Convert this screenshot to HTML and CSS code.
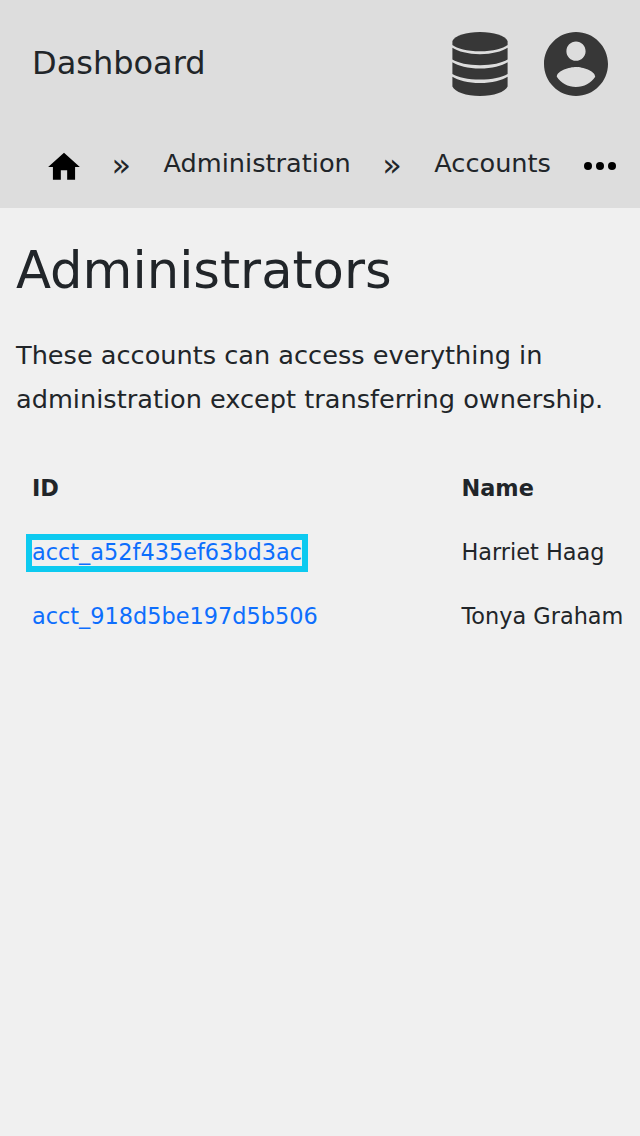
FILE: index.html
```html
<!DOCTYPE html>
<html lang="en">
<head>
<meta charset="utf-8">
<title>Administrators</title>
<link rel="stylesheet" href="styles.css">
</head>
<body>
<header class="header">
  <div class="topbar">
    <span class="brand">Dashboard</span>
    <svg class="icon-db" viewBox="0 0 56 64"><path d="M.4 9C3 3.500 14 0 28 0s25 3.500 27.600 9V13C51 16.500 41 19.300 28 19.300S5 16.500.4 13z"/><path d="M.4 15.800C6 19.500 16 22.200 28 22.200s22-2.700 27.600-6.400V27.500C50 31 40 33.200 28 33.200S6 31 .4 27.500z"/><path d="M.4 30.200C6 33.900 16 36.500 28 36.500s22-2.600 27.600-6.300V42C50 45.500 40 47.500 28 47.500S6 45.500.4 42z"/><path d="M.4 44.700C6 48.400 16 51 28 51s22-2.600 27.600-6.300V54.500C53 60 42 64 28 64S3 60 .4 54.500z"/></svg>
    <svg class="icon-user" viewBox="2 2 20 20"><path d="M12 2C6.48 2 2 6.48 2 12s4.480 10 10 10 10-4.480 10-10S17.520 2 12 2zm0 3c1.660 0 3 1.340 3 3s-1.340 3-3 3-3-1.340-3-3 1.340-3 3-3zm0 14.200c-2.500 0-4.710-1.280-6-3.220.03-1.990 4-3.080 6-3.080 1.990 0 5.970 1.090 6 3.080-1.290 1.940-3.500 3.220-6 3.220z"/></svg>
  </div>
  <nav class="crumbs">
    <svg class="icon-home" viewBox="0 0 24 24"><path d="M10 20v-6h4v6h5v-8h3L12 3 2 12h3v8z"/></svg>
    <span class="sep">»</span>
    <span class="crumb">Administration</span>
    <span class="sep">»</span>
    <span class="crumb">Accounts</span>
    <svg class="icon-more" viewBox="0 0 32 8"><circle cx="4" cy="4" r="4"/><circle cx="16" cy="4" r="4"/><circle cx="28" cy="4" r="4"/></svg>
  </nav>
</header>
<main class="content">
  <h1 class="title">Administrators</h1>
  <p class="intro">These accounts can access everything in administration except transferring ownership.</p>
  <div class="table">
    <b>ID</b><b>Name</b>
    <span><a class="link focused">acct_a52f435ef63bd3ac</a></span><span>Harriet Haag</span>
    <span><a class="link">acct_918d5be197d5b506</a></span><span>Tonya Graham</span>
  </div>
</main>
</body>
</html>
```
FILE: styles.css
```css
body {
  margin: 0;
  background: #f0f0f0;
  color: #212529;
  font-family: "DejaVu Sans", sans-serif;
}
svg { display: block; flex: none; }
.header { height: 208px; background: #ddd; }
.topbar {
  display: flex;
  align-items: center;
  height: 128px;
  padding: 0 32px;
}
.brand { flex: 1; font-size: 32px; line-height: 48px; padding-bottom: 2px; }
.icon-db { width: 56px; height: 64px; margin-right: 36px; fill: #373737; }
.icon-user { width: 64px; height: 64px; fill: #373737; }
.crumbs {
  display: flex;
  align-items: center;
  height: 76px;
  padding-left: 45px;
  font-size: 25.6px;
  white-space: nowrap;
}
.icon-home { width: 38px; height: 38px; padding-top: 1px; }
.sep { width: 20px; margin: 0 32px 0 31.5px; padding-bottom: 3px; font-size: 32px; }
.icon-home + .sep { margin: 0 32px 0 28.5px; }
.crumb { padding-bottom: 6px; }
.icon-more { width: 32px; height: 8px; margin-left: 33px; }
.content { padding: 24px 0 0 16px; }
.title { margin: 0; font-size: 51.2px; line-height: 77px; font-weight: 400; }
.intro { margin: 24px 0 0; font-size: 25.6px; line-height: 44px; }
.table {
  display: grid;
  grid-template-columns: 429.500px 1fr;
  margin-top: 35px;
  padding-left: 16px;
  font-size: 22.4px;
  line-height: 64px;
  white-space: nowrap;
}
.link { color: #0d6efd; }
.focused {
  display: inline-block;
  padding-bottom: 2px;
  line-height: 24px;
  outline: 6px solid #0dcaf0;
}
```
